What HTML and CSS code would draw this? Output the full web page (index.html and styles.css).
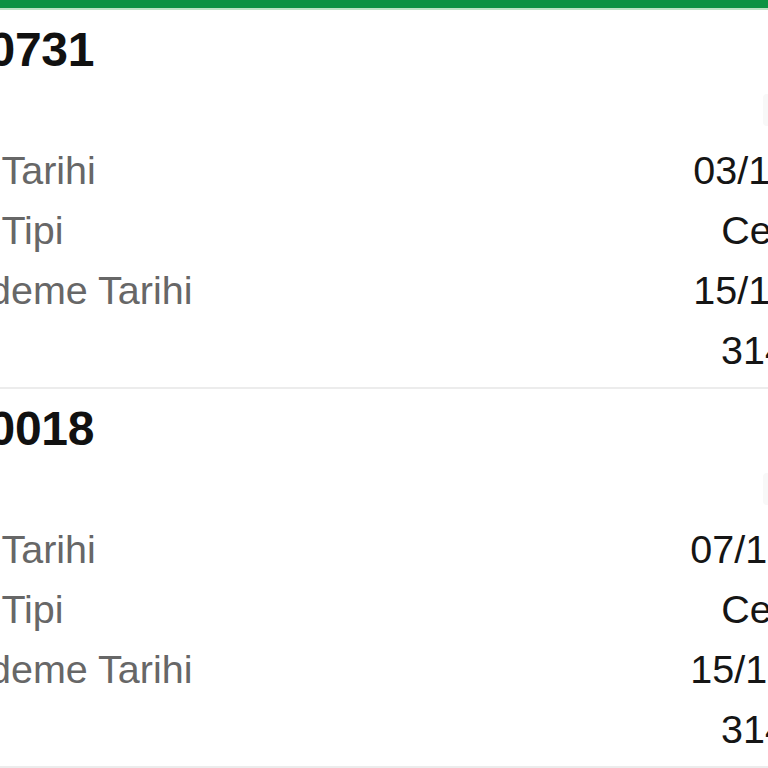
FILE: index.html
```html
<!DOCTYPE html>
<html lang="tr">
<head>
<meta charset="utf-8">
<link rel="stylesheet" href="styles.css">
</head>
<body>
<div class="topbar"></div>
<main class="list">
  <section class="card">
    <h2 class="card-title">20150731</h2>
    <div class="status-row"><span class="badge"></span></div>
    <div class="row"><span class="label">Fatura Tarihi</span><span class="value">03/11/2015</span></div>
    <div class="row"><span class="label">Fatura Tipi</span><span class="value">Cep Hattı</span></div>
    <div class="row"><span class="label">Son Ödeme Tarihi</span><span class="value">15/11/2015</span></div>
    <div class="row"><span class="label">Tutar</span><span class="value">314,50TL</span></div>
  </section>
  <section class="card">
    <h2 class="card-title">20150018</h2>
    <div class="status-row"><span class="badge"></span></div>
    <div class="row"><span class="label">Fatura Tarihi</span><span class="value">07/10/2015</span></div>
    <div class="row"><span class="label">Fatura Tipi</span><span class="value">Cep Hattı</span></div>
    <div class="row"><span class="label">Son Ödeme Tarihi</span><span class="value">15/10/2015</span></div>
    <div class="row"><span class="label">Tutar</span><span class="value">314,50TL</span></div>
  </section>
</main>
</body>
</html>
```
FILE: styles.css
```css
html, body {
  margin: 0;
  padding: 0;
  background: #ffffff;
  overflow: hidden;
}

body {
  font-family: "Liberation Sans", Arial, Helvetica, sans-serif;
  width: 768px;
  height: 768px;
}

.topbar {
  height: 8px;
  background: #0a9243;
  border-bottom: 2px solid #b9e2c4;
}

.list {
  width: 1011px;
  margin-left: -123px;
}

.card {
  padding-top: 10px;
  padding-bottom: 7px;
  border-bottom: 2px solid #ececec;
}

.card-title {
  margin: 0;
  font-size: 48px;
  font-weight: 700;
  line-height: 60px;
  color: #111111;
  letter-spacing: -0.3px;
  padding-left: 6px;
}

.status-row {
  height: 60px;
  display: flex;
  justify-content: flex-end;
  align-items: center;
}

.badge {
  width: 125px;
  height: 32px;
  border-radius: 4px;
  background: #f8f8f8;
}

.row {
  display: flex;
  justify-content: space-between;
  align-items: baseline;
  height: 60px;
  line-height: 60px;
  font-size: 39.5px;
}

.label {
  color: #676767;
}

.value {
  color: #151515;
}
```
